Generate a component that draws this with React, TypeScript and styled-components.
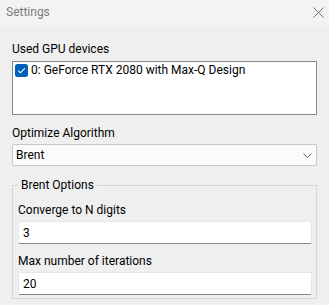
import styled, { createGlobalStyle } from 'styled-components'

const GlobalStyle = createGlobalStyle`
    html, body {
        margin: 0;
        padding: 0;
        background: #efefef;
    }
    body {
        font-family: "Segoe UI", Roboto, sans-serif;
        font-size: 12px;
        color: #000;
    }
`

const ChevronDown = () => (
    <svg width="9" height="5" viewBox="0 0 9 5" fill="none">
        <path d="M0.5 0.5 L4.5 4.5 L8.5 0.5" stroke="#5f5f5f" strokeWidth="1" />
    </svg>
)

const CloseIcon = () => (
    <svg width="11" height="11" viewBox="0 0 11 11" fill="none">
        <path d="M0.5 0.5 L10.5 10.5 M10.5 0.5 L0.5 10.5" stroke="#707070" strokeWidth="1" />
    </svg>
)

const CheckBox = () => (
    <svg width="13" height="13" viewBox="0 0 13 13">
        <rect x="0" y="0" width="13" height="13" rx="2.5" fill="#005fb8" />
        <path d="M3.2 6.7 L5.4 8.8 L9.8 4.3" stroke="#fff" strokeWidth="1.1" fill="none" />
    </svg>
)

export default function App() {
    return (
        <>
            <GlobalStyle />
            <Window>
                <TitleBar>
                    <span>Settings</span>
                    <CloseButton><CloseIcon /></CloseButton>
                </TitleBar>
                <Body>
                    <Label>Used GPU devices</Label>
                    <ListBox>
                        <ListItem>
                            <CheckBox />
                            <span>0: GeForce RTX 2080 with Max-Q Design</span>
                        </ListItem>
                    </ListBox>

                    <Label $top={10}>Optimize Algorithm</Label>
                    <Select>
                        <span>Brent</span>
                        <ChevronDown />
                    </Select>

                    <GroupBox>
                        <Legend>Brent Options</Legend>
                        <Label $top={1}>Converge to N digits</Label>
                        <TextInput>3</TextInput>
                        <Label $top={9}>Max number of iterations</Label>
                        <TextInput>20</TextInput>
                    </GroupBox>
                </Body>
            </Window>
        </>
    )
}

const Window = styled.div`
    width: 329px;
    height: 305px;
    display: flex;
    flex-direction: column;
    overflow: hidden;
`

const TitleBar = styled.div`
    height: 27px;
    flex-shrink: 0;
    display: flex;
    align-items: center;
    justify-content: space-between;
    padding: 0 5px 3px 6px;
    box-sizing: border-box;
    background: #f3f3f3;
    color: #7a7a7a;
    font-size: 12px;
`

const CloseButton = styled.div`
    display: flex;
    align-items: center;
`

const Body = styled.div`
    display: flex;
    flex-direction: column;
    padding: 14px 12px 0 12px;
`

const Label = styled.div<{ $top?: number }>`
    margin-top: ${p => p.$top ?? 0}px;
    line-height: 16px;
    height: 16px;
    margin-bottom: 3px;
`

const ListBox = styled.div`
    height: 54px;
    margin-top: 1px;
    box-sizing: border-box;
    background: #fff;
    border: 1px solid #828790;
    padding: 2px 2px;
`

const ListItem = styled.div`
    display: flex;
    align-items: center;
    gap: 3px;
    height: 13px;
    line-height: 13px;
`

const Select = styled.div`
    height: 22px;
    box-sizing: border-box;
    display: flex;
    align-items: center;
    justify-content: space-between;
    padding: 0 4px 0 3px;
    background: #fbfbfb;
    border: 1px solid #c3c7cc;
    border-radius: 2px;
`

const GroupBox = styled.fieldset`
    margin: 11px 0 0 0;
    padding: 8px 4px 3px 5px;
    border: 1px solid #d5d5d5;
    display: flex;
    flex-direction: column;
    min-width: 0;
`

const Legend = styled.legend`
    padding: 0 3px;
    line-height: 16px;
`

const TextInput = styled.div`
    height: 23px;
    box-sizing: border-box;
    display: flex;
    align-items: center;
    padding: 0 4px;
    background: #fff;
    border: 1px solid #e5e5e5;
    border-bottom: 1px solid #868686;
    border-radius: 2px;
`
